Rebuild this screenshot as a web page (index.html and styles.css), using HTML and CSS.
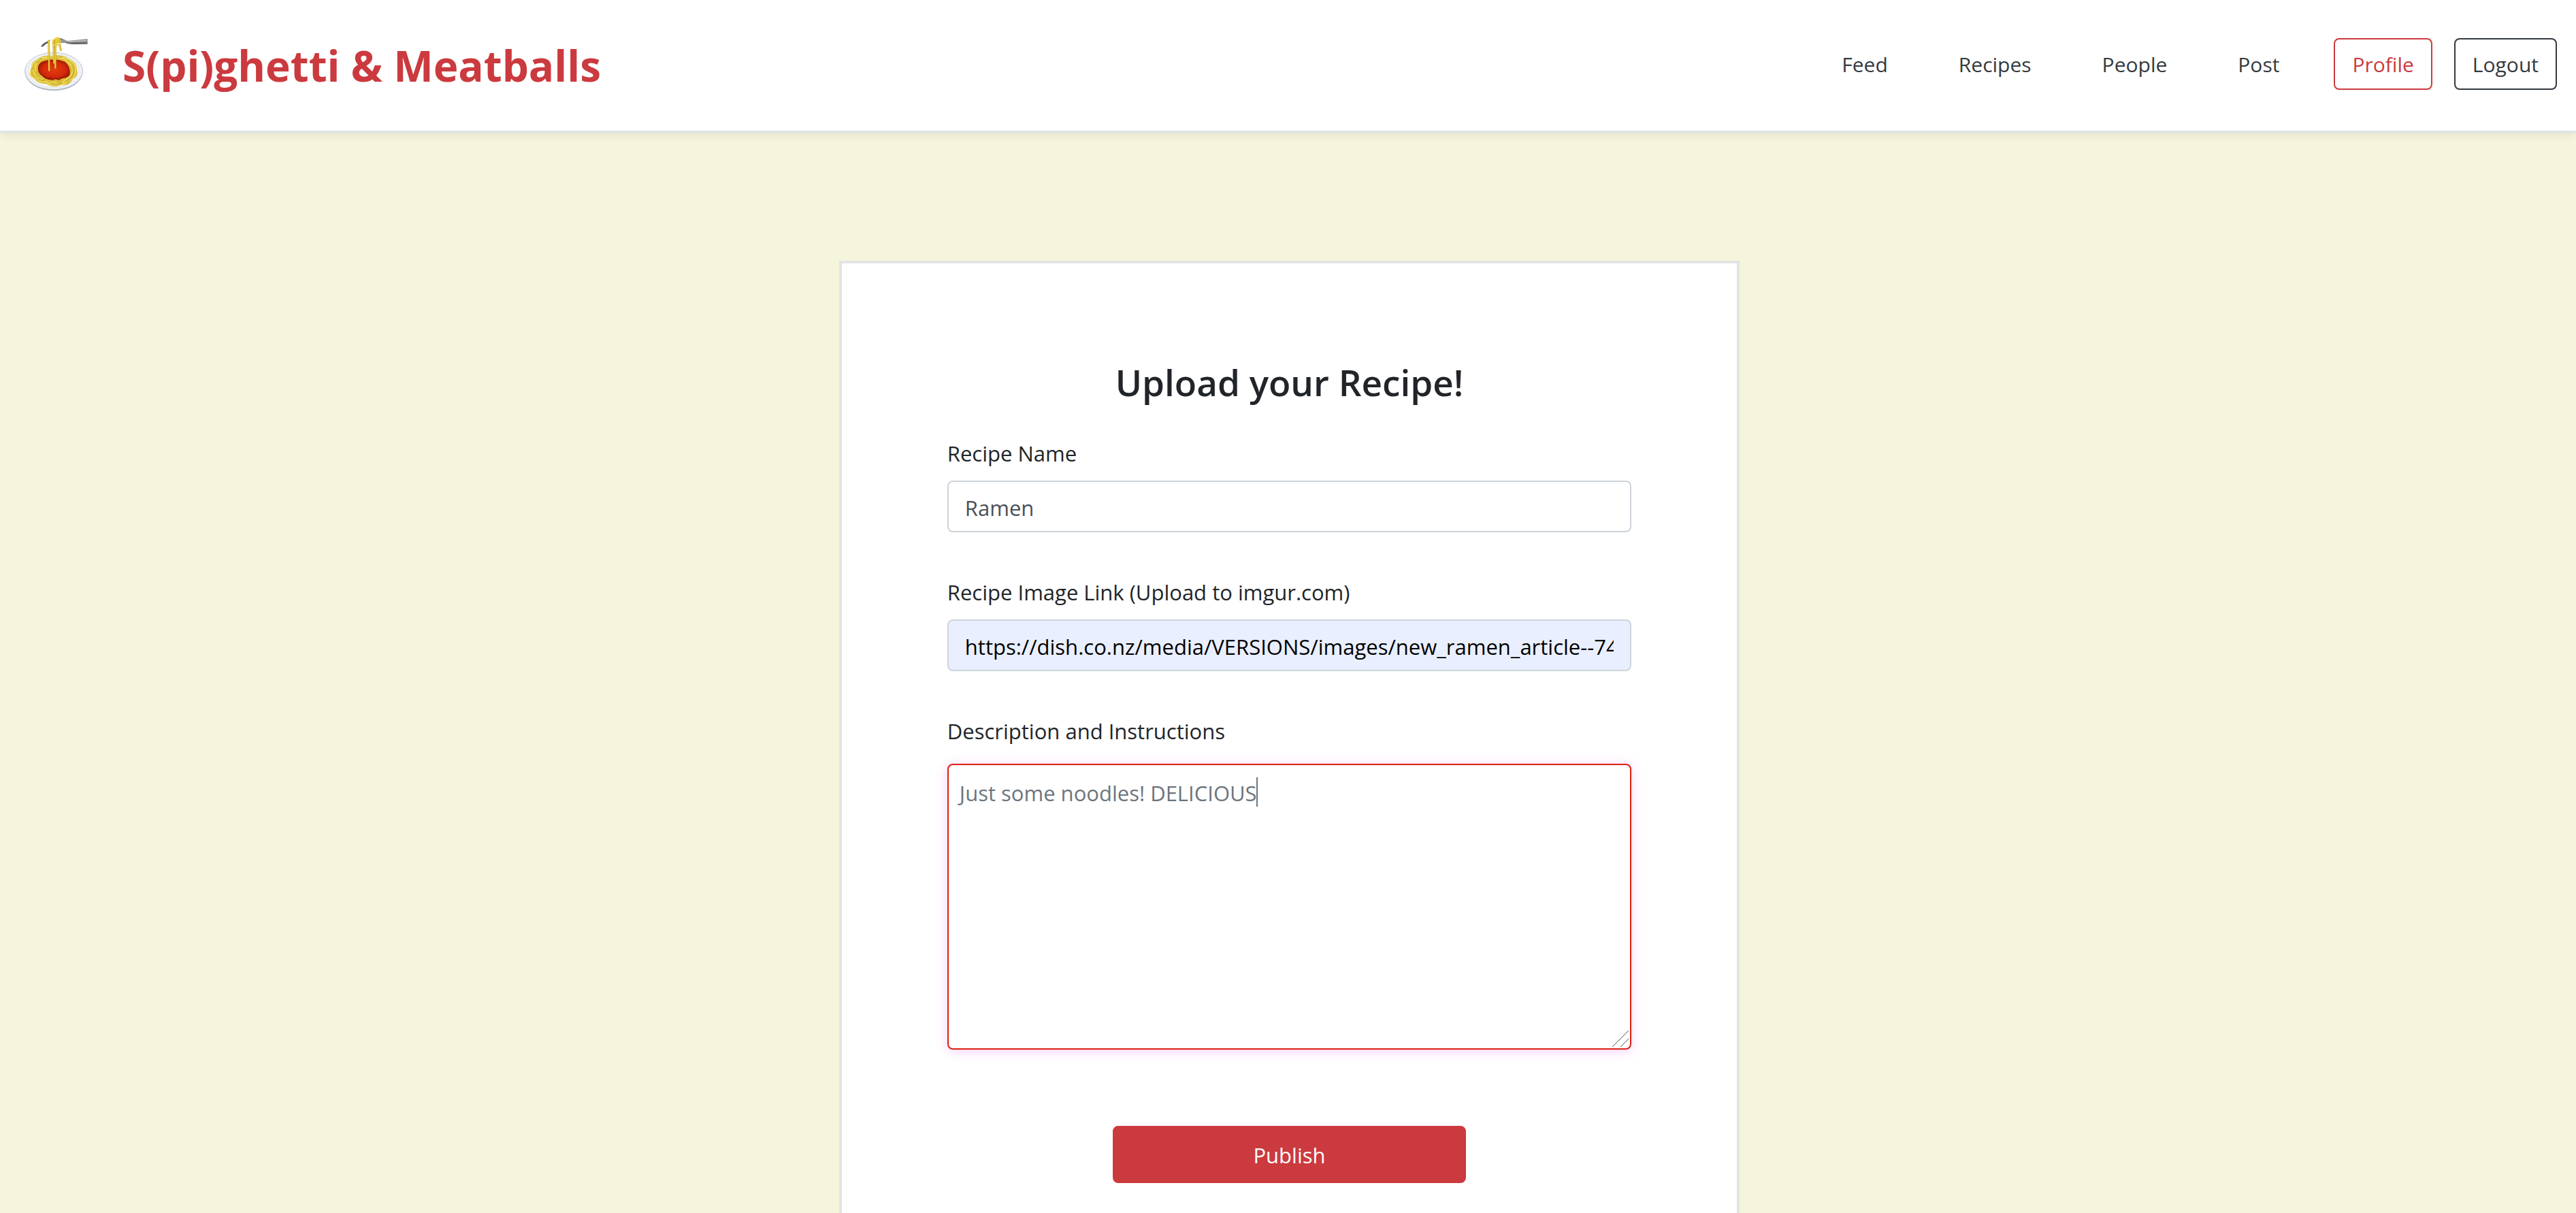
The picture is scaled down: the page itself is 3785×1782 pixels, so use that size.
FILE: index.html
```html
<!DOCTYPE html>
<html lang="en">
<head>
<meta charset="utf-8">
<title>S(pi)ghetti &amp; Meatballs</title>
<link rel="stylesheet" href="styles.css">
</head>
<body>
<header class="navbar">
  <svg class="logo" viewBox="105 94 285 252" role="img" aria-label="Plate of spaghetti">
    <defs>
      <radialGradient id="sauce"><stop offset="0" stop-color="#e63a10"/><stop offset=".7" stop-color="#d42a0a"/><stop offset="1" stop-color="#a81a06"/></radialGradient>
      <linearGradient id="steel" x1="0" y1="0" x2="0" y2="1"><stop offset="0" stop-color="#55565a"/><stop offset=".5" stop-color="#a5a6a8"/><stop offset="1" stop-color="#4c4c50"/></linearGradient>
    </defs>
    <ellipse cx="237" cy="254" rx="128" ry="84" fill="#b4bbc4"/>
    <ellipse cx="237" cy="251" rx="127" ry="82" fill="#eef0f4" stroke="#a9b4c4" stroke-width="2"/>
    <ellipse cx="237" cy="251" rx="111" ry="72" fill="#f8f9fa" stroke="#d9dde4" stroke-width="2"/>
    <path d="M138 232Q140 206 168 198Q190 180 225 184Q275 176 305 198Q340 212 339 243Q350 272 321 287Q305 318 270 313Q230 328 205 308Q165 306 155 288Q125 278 138 232Z" fill="#d9bb33"/>
    <g fill="none" stroke="#f0dc62" stroke-width="5" stroke-linecap="round">
      <path d="M140 235Q145 203 185 200Q210 179 245 193Q290 183 314 209Q340 222 333 252"/>
      <path d="M135 252Q127 277 160 283Q177 302 205 297Q219 320 253 310Q282 317 296 295Q334 284 333 249"/>
      <path d="M153 218Q137 239 152 262Q160 289 190 286"/>
      <path d="M169 205Q151 223 158 249M180 191Q228 197 278 195Q304 211 321 238"/>
      <path d="M309 220Q330 246 312 274Q290 286 274 303M213 306Q234 294 250 308"/>
    </g>
    <g fill="none" stroke="#a88a17" stroke-width="2">
      <path d="M145 245Q141 216 170 208M151 270Q168 296 199 291M207 187Q242 203 275 188M315 226Q333 252 314 281M221 302Q249 319 273 304M187 196Q169 201 161 213M289 297Q304 292 320 278"/>
    </g>
    <path d="M168 232Q173 210 201 205Q248 194 287 211Q313 233 308 266Q302 282 283 280Q265 293 239 287Q221 294 207 286Q195 284 185 271Q163 260 168 232Z" fill="url(#sauce)"/>
    <path d="M178 265Q199 276 213 287L220 280L231 290L244 283L259 290L272 279L291 280" fill="none" stroke="#8e1d08" stroke-width="4"/>
    <path d="M180 142Q192 125 214 119L222 112L218 124Q205 129 187 145Z" fill="#5c5c60"/>
    <path d="M245 104L270 107L296 118L386 110L386 132L325 133Q298 132 288 126L249 127Z" fill="url(#steel)"/>
    <path d="M300 122L380 116" stroke="#c4c4c6" stroke-width="4"/>
    <g fill="none" stroke="#b8961c" stroke-width="8" stroke-linecap="round">
      <path d="M215 118L217 249M236 116L238 216M244 112L244 238M258 112L268 159"/>
    </g>
    <g fill="none" stroke="#eed33d" stroke-width="5" stroke-linecap="round">
      <path d="M215 118L216 248M235 113L238 214M245 110L244 236M255 110L267 158M230 126Q239 105 256 104Q270 112 263 133Q251 145 239 135M250 107L252 136"/>
    </g>
  </svg>
  <h1 class="brand">S(pi)ghetti &amp; Meatballs</h1>
  <nav class="menu" aria-label="Main">
    <a class="menu-link" href="#feed">Feed</a>
    <a class="menu-link" href="#recipes">Recipes</a>
    <a class="menu-link" href="#people">People</a>
    <a class="menu-link" href="#post">Post</a>
  </nav>
  <div class="account">
    <button class="btn btn-outline-red" type="button">Profile</button>
    <button class="btn btn-outline-dark" type="button">Logout</button>
  </div>
</header>
<main class="page">
  <form class="card">
    <h2 class="card-title">Upload your Recipe!</h2>
    <div class="field">
      <label class="label" for="recipe-name">Recipe Name</label>
      <input class="input" id="recipe-name" type="text" value="Ramen">
    </div>
    <div class="field">
      <label class="label" for="recipe-image">Recipe Image Link (Upload to imgur.com)</label>
      <input class="input input-filled" id="recipe-image" type="text" value="https://dish.co.nz/media/VERSIONS/images/new_ramen_article--740x740.jpg">
    </div>
    <div class="field">
      <label class="label label-area" for="recipe-text">Description and Instructions</label>
      <div class="area-wrap">
        <textarea class="area" id="recipe-text">Just some noodles! DELICIOUS</textarea>
        <span class="caret"></span>
        <svg class="grip" viewBox="0 0 26 26" aria-hidden="true"><path d="M1 25L25 1M13 25L25 13" stroke="#555" fill="none"/></svg>
      </div>
    </div>
    <button class="btn btn-publish" type="submit">Publish</button>
  </form>
</main>
</body>
</html>
```
FILE: styles.css
```css
* { box-sizing: border-box; }

body {
  margin: 0;
  background: #f5f5dc;
  color: #212529;
  font: 400 31px/48px "Open Sans", "Noto Sans", sans-serif;
}

.navbar {
  display: flex;
  align-items: center;
  padding: 56px 28px 60px 35px;
  background: #fff;
  border-bottom: 3px solid #dee2e6;
  box-shadow: 0 4px 12px rgba(0, 0, 0, .07);
  font-size: 30px;
}

.logo {
  width: 95px;
  height: 84px;
  margin: -4px 0;
}

.brand {
  margin: 0 auto 0 50px;
  padding-top: 4px;
  color: #cb3a3e;
  font-size: 62px;
  font-weight: 700;
  line-height: 72px;
}

.menu {
  display: flex;
  gap: 104px;
  margin-right: 80px;
}

.menu-link {
  padding-top: 2px;
  color: #343a40;
  text-decoration: none;
}

.account {
  display: flex;
  gap: 32px;
}

.btn {
  padding: 13px 25px 11px;
  border: 2px solid;
  border-radius: 8px;
  background: transparent;
  font: inherit;
}

.btn-outline-red { color: #cb3a3e; }
.btn-outline-dark { color: #343a40; }

.page {
  display: flex;
  justify-content: center;
  padding: 188px 0 188px 4px;
}

.card {
  width: 35%;
  display: flex;
  flex-direction: column;
  gap: 64px;
  padding: 142px 155px;
  background: #fff;
  border: 4px solid #e2e4e4;
}

.card-title {
  margin: 0 0 -16px;
  font-size: 53px;
  font-weight: 600;
  line-height: 65px;
  text-align: center;
}

.field {
  display: flex;
  flex-direction: column;
}

.label { margin-bottom: 16px; }
.label-area { margin-bottom: 24px; }

.input {
  width: 100%;
  height: 76px;
  padding: 14px 24px 10px;
  border: 2px solid #ced4da;
  border-radius: 8px;
  background: #fff;
  color: #495057;
  font: inherit;
}

.input-filled {
  background: #e9efff;
  color: #000;
}

.area-wrap {
  position: relative;
  display: flex;
}

.area {
  width: 100%;
  height: 420px;
  padding: 17px 16px;
  border: 2px solid #dc1f14;
  border-radius: 8px;
  outline: 0;
  box-shadow: 0 2px 16px rgba(226, 60, 240, .25);
  color: #6c757d;
  font: inherit;
  resize: none;
}

.caret {
  position: absolute;
  top: 20px;
  left: 454px;
  width: 2px;
  height: 43px;
  background: #6c757d;
}

.grip {
  position: absolute;
  right: 3px;
  bottom: 3px;
  width: 26px;
  height: 26px;
}

.btn-publish {
  align-self: center;
  width: 519px;
  margin-top: 48px;
  padding: 17px 24px 15px;
  border-color: #cb3a3e;
  background: #cb3a3e;
  color: #fff;
}
```
